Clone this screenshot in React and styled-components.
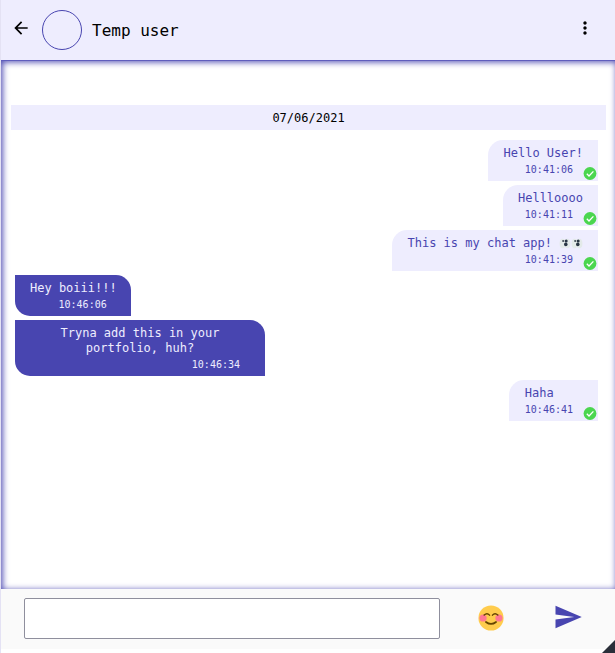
import React from "react";
import styled, { createGlobalStyle } from "styled-components";

const indigo = "#4845b0";
const lavender = "#eeedfe";

const GlobalStyle = createGlobalStyle`
  * { box-sizing: border-box; }
  body { margin: 0; background: #fff; font-family: "DejaVu Sans Mono", monospace; }
`;

const Shell = styled.div`
  position: relative;
  display: flex;
  flex-direction: column;
  height: 653px;
  padding-bottom: 4px;
  border-left: 1px solid #e4e2f4;
  overflow: hidden;
`;

const Header = styled.header`
  display: flex;
  align-items: center;
  flex: none;
  height: 60px;
  padding: 0 20px 0 10px;
  background: ${lavender};
`;

const IconButton = styled.button`
  display: flex;
  padding: 0;
  border: 0;
  background: none;
  color: ${(p) => p.$color || "#000"};
  svg { display: block; fill: currentColor; }
`;

const BackButton = styled(IconButton)`
  margin: 0 11px 4px 0;
`;

const MenuButton = styled(IconButton)`
  margin: 0 0 4px auto;
`;

const Avatar = styled.div`
  width: 40px;
  height: 40px;
  border: 1px solid ${indigo};
  border-radius: 50%;
`;

const UserName = styled.h1`
  margin: 0 0 0 10px;
  font-size: 16px;
  font-weight: 400;
  line-height: 19px;
`;

const Conversation = styled.main`
  flex: 1;
  padding: 44px 8px 0 10px;
  border-top: 1px solid #5f5dbd;
  box-shadow: inset 1.5px 1px 6px ${indigo};
`;

const DateBar = styled.div`
  height: 25px;
  margin-bottom: 10px;
  margin-right: 1px;
  padding-top: 1px;
  background: ${lavender};
  font-size: 12px;
  line-height: 25px;
  text-align: center;
`;

const Messages = styled.div`
  display: flex;
  flex-direction: column;
  gap: 4px;
  padding: 0 9px 0 4px;
`;

const Bubble = styled.div`
  position: relative;
  display: flex;
  flex-direction: column;
  align-self: ${(p) => (p.$own ? "flex-end" : "flex-start")};
  max-width: 250px;
  padding: 6px 15px 4px;
  padding-left: ${(p) => (p.$own ? 15.4 : 15)}px;
  padding-right: ${(p) => (p.$own || p.$centered ? 15 : 14)}px;
  border-radius: ${(p) => (p.$own ? "15px 0 0 0" : "0 15px 0 15px")};
  background: ${(p) => (p.$own ? lavender : indigo)};
  color: ${(p) => (p.$own ? indigo : lavender)};
`;

const Text = styled.div`
  display: flex;
  justify-content: ${(p) => (p.$centered ? "center" : "flex-start")};
  text-align: ${(p) => (p.$centered ? "center" : "left")};
  font-size: 12px;
  line-height: 15px;
`;

const Time = styled.time`
  align-self: flex-end;
  margin: 2px 10px 0 0;
  font-size: 10px;
  line-height: 14px;
`;

const Tick = styled.svg`
  position: absolute;
  right: 1px;
  bottom: 0;
`;

const Eyes = styled.svg`
  flex: none;
  margin-left: 7px;
`;

const Composer = styled.footer`
  display: flex;
  align-items: center;
  flex: none;
  height: 60px;
  padding: 0 32px 0 23px;
  background: #fafafa;
`;

const MessageInput = styled.input`
  width: 416px;
  height: 41px;
  margin: 0 0 1px;
  border: 1px solid #8f8f9d;
  border-radius: 2px;
  background: #fff;
`;

const EmojiButton = styled(IconButton)`
  margin: 0 0 2px 38px;
`;

const SendButton = styled(IconButton)`
  margin: 0 0 4px auto;
`;

const Corner = styled.div`
  position: absolute;
  right: 0;
  bottom: 0;
  width: 13px;
  height: 13px;
  background: #2a2e39;
  clip-path: polygon(100% 0, 100% 100%, 0 100%);
`;

const EyePair = () => (
  <Eyes width="24" height="15" viewBox="0 0 24 15">
    {[0, 12].map((x) => (
      <g key={x} transform={`translate(${x} 0)`}>
        <ellipse cx="3.6" cy="7.5" rx="3" ry="4.8" fill="#e3eae9" />
        <ellipse cx="8.4" cy="7.5" rx="3" ry="4.8" fill="#e3eae9" />
        <circle cx="4.2" cy="5" r="1.1" fill="#46505a" />
        <circle cx="7.2" cy="5" r="1.5" fill="#293644" />
        <circle cx="6.8" cy="8.4" r="1.8" fill="#293644" />
      </g>
    ))}
  </Eyes>
);

const Smile = () => (
  <svg width="26" height="26" viewBox="0 0 36 36">
    <circle cx="18" cy="18" r="17.4" fill="#ffcc4d" />
    <circle cx="7" cy="18" r="5" fill="#ff7892" />
    <circle cx="29" cy="18" r="5" fill="#ff7892" />
    <g fill="none" stroke="#664500" strokeWidth="2" strokeLinecap="round">
      <path d="M8.5 14Q12.5 10 16 14M20 14Q23.5 10 27.5 14" />
      <path d="M11 23.5Q18 29 25 23.5" strokeWidth="2.4" />
    </g>
  </svg>
);

const messages = [
  { own: true, text: "Hello User!", time: "10:41:06" },
  { own: true, text: "Hellloooo", time: "10:41:11" },
  { own: true, text: "This is my chat app!", eyes: true, time: "10:41:39" },
  { text: "Hey boiii!!!", time: "10:46:06" },
  { text: "Tryna add this in your portfolio, huh?", centered: true, time: "10:46:34" },
  { own: true, text: "Haha", time: "10:46:41" },
];

function Message({ own, text, eyes, centered, time }) {
  return (
    <Bubble $own={own} $centered={centered}>
      <Text $centered={centered}>
        {text}
        {eyes && <EyePair />}
      </Text>
      <Time>{time}</Time>
      {own && (
        <Tick width="14" height="14" viewBox="0 0 14 14">
          <circle cx="7" cy="6.5" r="6.4" fill="#4bd64f" />
          <path d="M3.8 6.8L6 9L10.4 4.4" fill="none" stroke="#fff" strokeWidth="1.3" />
        </Tick>
      )}
    </Bubble>
  );
}

export default function App() {
  return (
    <Shell>
      <GlobalStyle />
      <Header>
        <BackButton aria-label="Back">
          <svg width="20" height="20" viewBox="0 0 24 24">
            <path d="M20 11H7.83l5.59-5.59L12 4l-8 8 8 8 1.41-1.41L7.83 13H20v-2z" />
          </svg>
        </BackButton>
        <Avatar />
        <UserName>Temp user</UserName>
        <MenuButton aria-label="Menu">
          <svg width="20" height="20" viewBox="0 0 24 24">
            <path d="M12 8c1.1 0 2-.9 2-2s-.9-2-2-2-2 .9-2 2 .9 2 2 2zm0 2c-1.1 0-2 .9-2 2s.9 2 2 2 2-.9 2-2-.9-2-2-2zm0 6c-1.1 0-2 .9-2 2s.9 2 2 2 2-.9 2-2-.9-2-2-2z" />
          </svg>
        </MenuButton>
      </Header>
      <Conversation>
        <DateBar>07/06/2021</DateBar>
        <Messages>
          {messages.map((m) => (
            <Message key={m.time} {...m} />
          ))}
        </Messages>
      </Conversation>
      <Composer>
        <MessageInput aria-label="Message" />
        <EmojiButton aria-label="Emoji">
          <Smile />
        </EmojiButton>
        <SendButton aria-label="Send" $color={indigo}>
          <svg width="30" height="30" viewBox="0 0 24 24">
            <path d="M2.01 21L23 12 2.01 3 2 10l15 2-15 2z" />
          </svg>
        </SendButton>
      </Composer>
      <Corner />
    </Shell>
  );
}
